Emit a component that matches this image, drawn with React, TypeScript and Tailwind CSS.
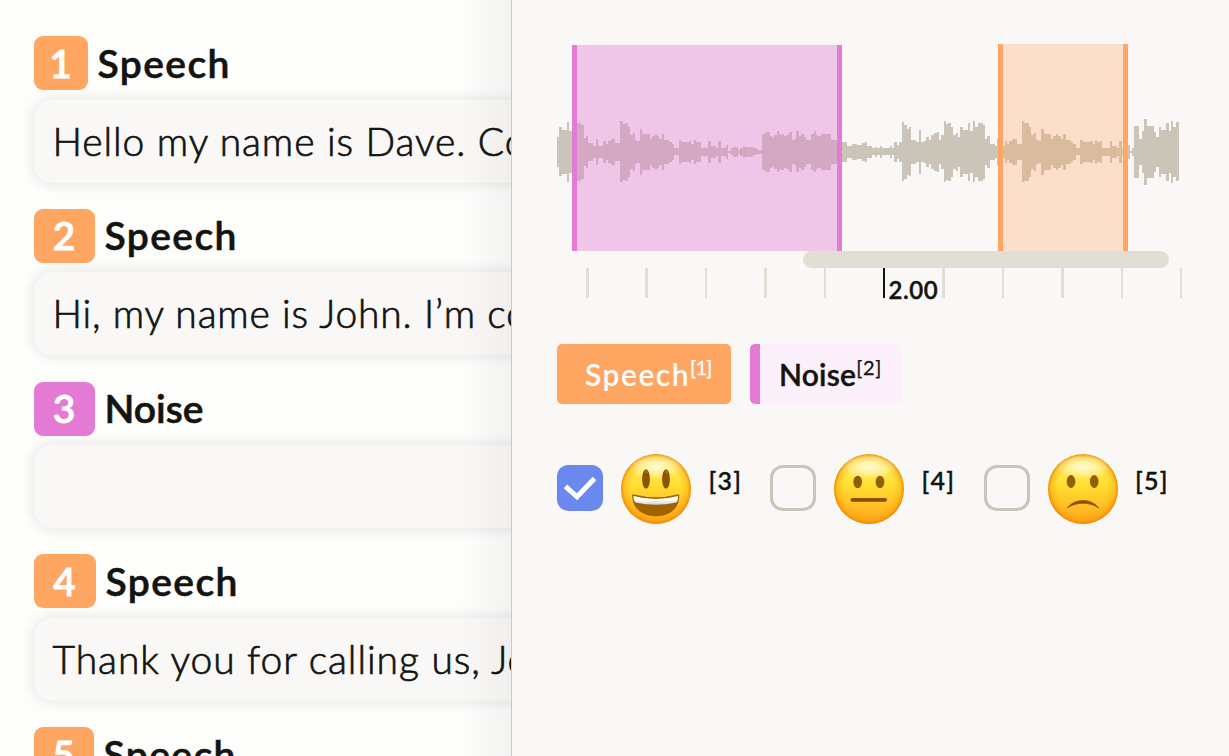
import React from "react";

type Step = [number, number];

// Each step is [start x, half amplitude], both in pixels.
const scaled = (origin: number, steps: Step[]): Step[] =>
  steps.map(([x, h]) => [origin + x / 3, h]);

const WAVE: Step[] = [
  ...scaled(0, [
    [20, 15], [28, 24.5], [35, 22], [50, 30], [57, 21], [65, 30], [80, 29], [93, 27], [101, 14], [108, 16], [115, 9],
    [130, 6], [137, 13], [145, 6], [160, 11], [167, 8], [175, 11], [182, 13], [196, 9], [211, 30.5], [218, 28],
    [226, 29], [233, 25], [240, 17], [248, 19], [255, 12], [262, 11], [270, 23], [277, 18], [299, 13], [306, 16],
    [316, 18], [321, 16], [328, 13], [336, 18], [343, 12], [358, 10], [365, 8], [372, 3.5], [387, 12], [394, 10],
    [416, 11], [424, 8], [431, 12], [438, 10], [453, 4],
  ]),
  ...scaled(150, [
    [25, 11], [33, 6], [47, 4], [54, 11], [62, 4], [77, 7], [84, 1], [92, 3.5], [99, 5], [114, 2], [121, 4], [128, 6],
    [136, 5], [160, 3.5], [172, 2], [187, 18], [194, 20], [209, 16], [216, 15], [223, 17], [231, 20.5], [238, 18],
    [253, 16], [260, 17], [267, 20], [275, 12], [282, 13], [289, 20.5], [297, 16], [304, 18], [312, 15], [319, 12],
    [333, 18], [341, 20.5], [348, 17], [355, 16], [362, 18], [392, 13], [399, 12],
  ]),
  ...scaled(290, [
    [7, 10], [22, 6], [37, 8], [52, 7], [67, 9], [75, 10], [82, 6], [97, 3.5], [104, 5], [112, 3.5], [119, 6],
    [127, 3.5], [149, 6], [156, 3.5], [163, 10], [170, 7], [178, 10], [185, 29.5], [192, 27], [200, 23], [207, 24.5],
    [214, 12], [229, 10], [237, 22], [244, 10], [252, 11], [259, 15], [266, 12], [273, 17], [281, 19], [290, 20],
    [296, 12], [303, 17], [311, 30.5], [318, 28], [325, 29], [332, 25], [340, 17], [347, 19], [354, 15], [361, 25],
    [369, 22], [384, 29], [391, 21], [398, 30.5], [406, 25], [413, 29], [428, 27], [435, 13], [442, 16], [449, 8],
    [464, 6], [472, 13], [479, 6],
  ]),
  ...scaled(450, [
    [8, 6], [14, 11], [21, 8], [28, 11], [36, 13], [50, 8], [66, 30.5], [73, 29], [87, 25], [94, 17], [102, 19],
    [109, 12], [116, 11], [124, 23], [131, 18], [153, 13], [160, 16], [168, 18], [175, 16], [182, 13], [190, 18],
    [197, 12], [212, 10], [219, 8], [227, 3.5], [241, 12], [249, 10], [270, 11], [278, 8], [285, 12], [292, 10],
    [300, 11], [307, 4], [330, 11], [337, 6], [351, 4], [358, 11], [366, 3], [384, 7], [389, 1], [396, 4], [402, 26],
    [417, 13], [425, 21], [432, 33], [440, 26], [462, 20], [469, 15], [476, 25], [483, 22], [498, 29], [506, 21],
    [513, 31], [520, 25], [528, 29.5],
  ]),
];

const WAVE_END = 628.6;
const MID = 107.8;

const wavePath = WAVE.map(([x, h], i) => {
  const end = i + 1 < WAVE.length ? WAVE[i + 1][0] : WAVE_END;
  return `M${x.toFixed(2)} ${MID - h}H${end.toFixed(2)}V${MID + h}H${x.toFixed(2)}Z`;
}).join("");

const segments = [
  { n: 1, label: "Speech", text: "Hello my name is Dave. Co", badge: "w-[54px] bg-[#ffa663]", track: "tracking-[1.4px]", body: "tracking-[0.92px]" },
  { n: 2, label: "Speech", text: "Hi, my name is John. I’m co", badge: "w-[61px] bg-[#ffa663]", track: "tracking-[1.4px]", body: "tracking-[0.82px]" },
  { n: 3, label: "Noise", text: "", badge: "w-[61px] bg-[#e37bd4]", track: "tracking-[0px]", body: "" },
  { n: 4, label: "Speech", text: "Thank you for calling us, Jo", badge: "w-[62px] bg-[#ffa663]", track: "tracking-[1.4px]", body: "tracking-[0.95px]" },
  { n: 5, label: "Speech", text: "", badge: "w-[60px] bg-[#ffa663]", track: "tracking-[1.4px]", body: "" },
];

function Segments() {
  return (
    <section className="relative h-full w-[511px] shrink-0 overflow-hidden bg-[#fdfdfc] pl-[33.5px] pt-[36px]">
      {segments.map((s) => (
        <div key={s.n} className="h-[172.8px]">
          <div className="flex h-[54px] items-center gap-[10px]">
            <span className={`flex h-[54px] items-center justify-center rounded-[9px] text-[39px] font-semibold leading-none text-white [-webkit-text-stroke:0.8px_white] ${s.badge}`}>
              {s.n}
            </span>
            <span className={`whitespace-nowrap text-[39px] font-semibold leading-none [-webkit-text-stroke:0.6px_#131310] ${s.track}`}>
              {s.label}
            </span>
          </div>
          <div className="mt-[9.5px] flex h-[83px] w-[620px] items-center rounded-[19px] bg-[#f9f8f7] pl-[19px] shadow-[0_0_12px_2px_rgba(30,25,20,0.09)]">
            <span className={`whitespace-nowrap text-[39px] font-light leading-none [-webkit-text-stroke:0.7px_#131310] ${s.body}`}>
              {s.text}
            </span>
          </div>
        </div>
      ))}
      <div className="absolute inset-y-0 right-0 w-[50px] bg-linear-to-r from-transparent to-black/4" />
    </section>
  );
}

function Waveform() {
  return (
    <div className="relative h-[207px] w-[629px]">
      <svg className="block h-[207px] w-[629px]" viewBox="0 0 629 207">
        <path d={wavePath} fill="#cac5b8" shapeRendering="crispEdges" />
      </svg>
      <div className="absolute bottom-0 left-[22px] top-px w-[270px] border-x-[5px] border-[#e37bd4] bg-[#e37bd4]/40 bg-clip-padding" />
      <div className="absolute bottom-0 left-[448px] top-0 w-[130px] border-x-[5px] border-[#ffa663] bg-[#ffa663]/30 bg-clip-padding" />
    </div>
  );
}

function Timeline() {
  return (
    <div>
      <div className="ml-[253px] h-[17px] w-[366px] rounded-full bg-[#e1ded5]" />
      <div className="ml-[36px] flex h-[30px]">
        {Array.from({ length: 11 }, (_, i) => (
          <div key={i} className="flex h-[30px] w-[59.4px] shrink-0">
            <div className={`h-[30px] w-[2.5px] shrink-0 ${i === 5 ? "bg-[#131310]" : "bg-[#e1ded5]"}`} />
            {i === 5 && (
              <span className="ml-[3px] mt-[9px] text-[24px] font-semibold leading-[26px] tracking-[0.6px] [-webkit-text-stroke:0.4px_#131310]">
                2.00
              </span>
            )}
          </div>
        ))}
      </div>
    </div>
  );
}

type Mood = "happy" | "neutral" | "sad";

function Face({ mood }: { mood: Mood }) {
  const fill = `face-${mood}`;
  return (
    <svg className="block size-[70px] shrink-0" viewBox="0 0 70 70">
      <defs>
        <linearGradient id={fill} x1="0" y1="0" x2="0" y2="1">
          <stop offset="0" stopColor="#fff27a" />
          <stop offset=".45" stopColor="#ffdf30" />
          <stop offset="1" stopColor="#ffa31c" />
        </linearGradient>
        <radialGradient id={`${fill}-rim`} cx=".5" cy=".5" r=".51">
          <stop offset=".7" stopColor="#f59400" stopOpacity="0" />
          <stop offset=".88" stopColor="#f79a00" stopOpacity=".35" />
          <stop offset="1" stopColor="#e87800" stopOpacity=".95" />
        </radialGradient>
        <radialGradient id={`${fill}-shine`}>
          <stop offset="0" stopColor="#fffbe0" stopOpacity=".95" />
          <stop offset=".5" stopColor="#fffbd0" stopOpacity=".55" />
          <stop offset="1" stopColor="#fff" stopOpacity="0" />
        </radialGradient>
        <linearGradient id={`${fill}-teeth`} x1="0" y1="0" x2="0" y2="1">
          <stop offset=".4" stopColor="#fff" />
          <stop offset="1" stopColor="#ccd2dc" />
        </linearGradient>
      </defs>
      <circle cx="35" cy="35" r="35" fill={`url(#${fill})`} />
      <circle cx="35" cy="35" r="35" fill={`url(#${fill}-rim)`} />
      <ellipse cx="35" cy="13" rx="27" ry="12" fill={`url(#${fill}-shine)`} />
      {mood === "happy" && (
        <>
          <ellipse cx="25" cy="25" rx="3.9" ry="9.8" fill="#8f5400" />
          <ellipse cx="45" cy="25" rx="3.9" ry="9.8" fill="#8f5400" />
          <path d="M24.2 18.5q1.2-1.5 2 .5M44.2 18.5q1.2-1.5 2 .5" stroke="#b37b18" strokeWidth="1.6" fill="none" />
          <path d="M11.2 41C11 54 21 62.2 35 62.2S59 54 58.2 41Q57.8 40 56.5 40.5Q35 46 13 40.5Q11.3 40 11.2 41Z" fill="#a36200" />
          <path d="M12.6 42Q35 48 57 42Q57.4 46.5 55 48.6Q35 53 14.8 48.6Q12.2 46.5 12.6 42Z" fill={`url(#${fill}-teeth)`} />
        </>
      )}
      {mood === "neutral" && (
        <>
          <ellipse cx="23.7" cy="28" rx="4.3" ry="6.2" fill="#955b05" />
          <ellipse cx="46" cy="28" rx="4.3" ry="6.2" fill="#955b05" />
          <rect x="16.5" y="44" width="36.5" height="3.8" rx="1.8" fill="#8c5000" />
        </>
      )}
      {mood === "sad" && (
        <>
          <ellipse cx="23" cy="27.5" rx="4.3" ry="6.5" fill="#955b05" />
          <ellipse cx="46.2" cy="27.5" rx="4.3" ry="6.5" fill="#955b05" />
          <path d="M19.3 54Q25 46.5 35 46.5T50.7 54Q44 49.3 35 49.3T19.3 54Z" fill="#8c5000" stroke="#8c5000" strokeWidth=".7" strokeLinejoin="round" />
        </>
      )}
    </svg>
  );
}

const choices: { mood: Mood; key: string; checked: boolean; width: string }[] = [
  { mood: "happy", key: "[3]", checked: true, width: "w-[213px]" },
  { mood: "neutral", key: "[4]", checked: false, width: "w-[213.5px]" },
  { mood: "sad", key: "[5]", checked: false, width: "w-[190px]" },
];

function Check({ checked }: { checked: boolean }) {
  return (
    <svg className="-mt-[2px] size-[46px] shrink-0" viewBox="0 0 46 46">
      {checked ? (
        <>
          <rect width="46" height="46" rx="11.5" fill="#6b88ef" />
          <path d="M8.5 21.3L20 31.8L37.5 13.5" fill="none" stroke="#fff" strokeWidth="5" />
        </>
      ) : (
        <rect x="1.5" y="1.5" width="43" height="43" rx="11.5" fill="none" stroke="#cac5b8" strokeWidth="3" />
      )}
    </svg>
  );
}

export default function App() {
  return (
    <main className="flex h-[756px] w-[1229px] overflow-hidden bg-[#f9f8f6] font-['Lato',sans-serif] text-[#131310]">
      <Segments />
      <section className="h-full grow overflow-hidden border-l-[1.5px] border-[#cbc9c0] pl-[38px] pt-[44px]">
        <Waveform />
        <Timeline />
        <div className="ml-[7px] mt-[46px] flex h-[60px] gap-[19px]">
          <div className="flex w-[174px] items-center rounded-[5px] bg-[#ffa663] pl-[28px] text-white">
            <span className="whitespace-nowrap text-[30px] font-semibold leading-none tracking-[1.5px]">Speech</span>
            <span className="-mt-[15px] text-[20px] leading-none tracking-[-0.8px] [-webkit-text-stroke:0.3px_white]">[1]</span>
          </div>
          <div className="flex w-[152px] items-center rounded-[5px] border-l-[10px] border-[#e37bd4] bg-[#fcf1fb] pl-[19px]">
            <span className="whitespace-nowrap text-[30px] font-semibold leading-none tracking-[0.2px] [-webkit-text-stroke:0.4px_#131310]">Noise</span>
            <span className="-mt-[15px] text-[20px] leading-none tracking-[0.7px] [-webkit-text-stroke:0.3px_#131310]">[2]</span>
          </div>
        </div>
        <div className="ml-[7px] mt-[49.5px] flex h-[70px] items-center">
          {choices.map((c) => (
            <label key={c.mood} className={`flex shrink-0 items-center ${c.width}`}>
              <Check checked={c.checked} />
              <span className="ml-[18px]">
                <Face mood={c.mood} />
              </span>
              <span className="-mt-[16px] ml-[17.5px] text-[25px] font-semibold leading-none tracking-[1.2px] [-webkit-text-stroke:0.3px_#131310]">
                {c.key}
              </span>
            </label>
          ))}
        </div>
      </section>
    </main>
  );
}
